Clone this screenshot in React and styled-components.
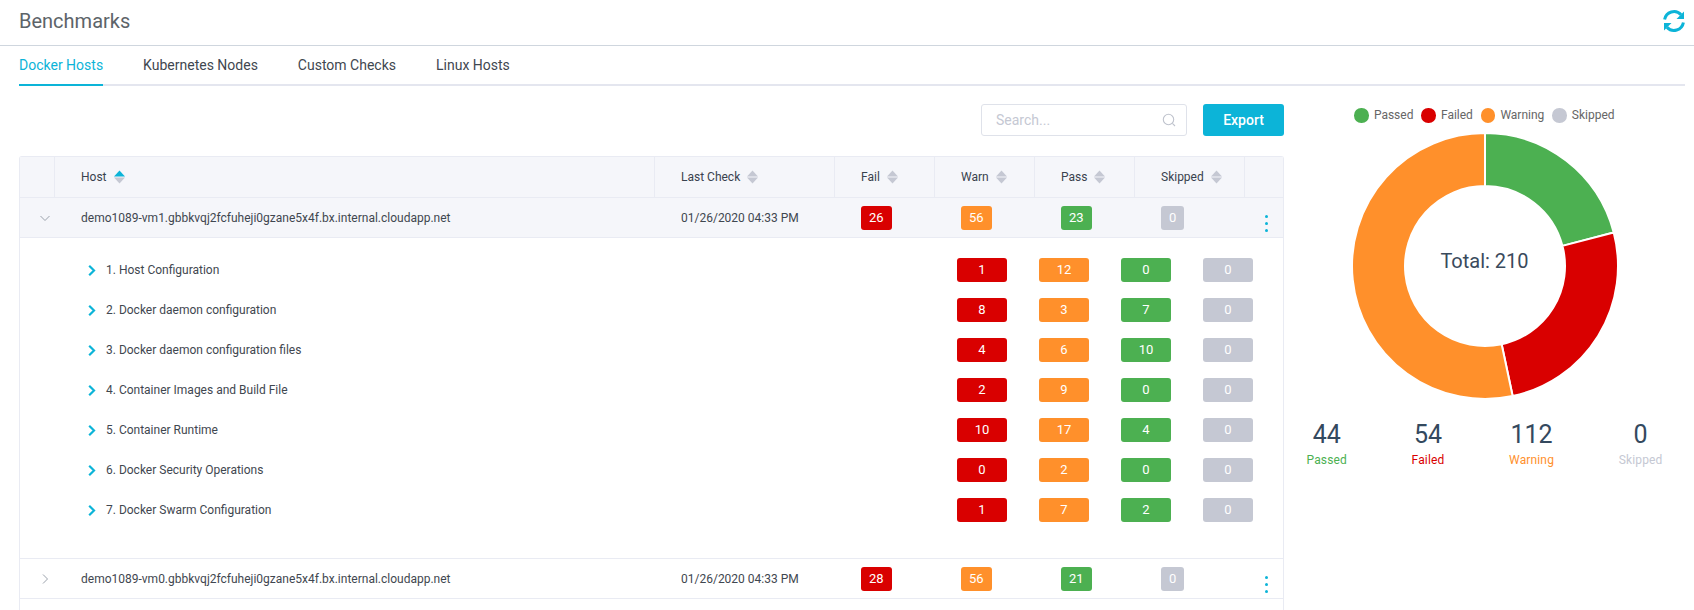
import React from "react";
import styled, { createGlobalStyle } from "styled-components";

const CYAN = "#0cb4d8";
const RED = "#d90000";
const ORANGE = "#ff902b";
const GREEN = "#4cb051";
const GREY = "#c5c8d3";
const LINE = "#e9ebf3";

const Global = createGlobalStyle`
  html, body { margin: 0; padding: 0; background: #fff; overflow: hidden; }
  body { font-family: Roboto, "Liberation Sans", sans-serif; color: #3a4654; }
  * { box-sizing: border-box; }
`;

const Page = styled.div`
  width: 1694px;
  height: 610px;
  overflow: hidden;
`;
const TopBar = styled.header`
  height: 46px;
  padding: 0 9px 0 19px;
  border-bottom: 1px solid #cfd6de;
  display: flex;
  align-items: center;
  justify-content: space-between;
`;
const Title = styled.h1`
  margin: 0 0 3px;
  font-size: 20px;
  font-weight: 400;
  color: #5d6469;
`;
const RefreshSvg = styled.svg`
  width: 22px;
  height: 22px;
  margin-bottom: 3px;
  fill: none;
  stroke: ${CYAN};
  stroke-width: 3;
`;
const Tabs = styled.nav`
  margin: 0 9px 0 19px;
  height: 40px;
  display: flex;
  gap: 40px;
  border-bottom: 2px solid #e4e6ef;
`;
const Tab = styled.div`
  height: 40px;
  padding-top: 10px;
  font-size: 14px;
  line-height: 18px;
  color: ${(p) => (p.$active ? CYAN : "#3f4750")};
  border-bottom: 2px solid ${(p) => (p.$active ? CYAN : "transparent")};
`;
const Content = styled.div`
  display: flex;
  padding: 18px 9px 0 19px;
`;
const Main = styled.main`
  width: 1265px;
  flex: none;
`;
const Tools = styled.div`
  display: flex;
  justify-content: flex-end;
  gap: 16px;
  margin-bottom: 20px;
`;
const Search = styled.div`
  width: 206px;
  height: 32px;
  border: 1px solid #dfe2ea;
  border-radius: 3px;
  padding: 0 10px 1px 14px;
  display: flex;
  align-items: center;
  justify-content: space-between;
  font-size: 14px;
  color: #c5c8d3;
`;
const Export = styled.button`
  width: 81px;
  height: 32px;
  border: 0;
  border-radius: 3px;
  padding: 0 0 1px;
  background: ${CYAN};
  color: #fff;
  font: 500 14px Roboto, sans-serif;
`;
const Table = styled.div`
  border: 1px solid ${LINE};
  border-bottom: 0;
  border-radius: 3px 3px 0 0;
  height: 460px;
`;
const Row = styled.div`
  display: grid;
  grid-template-columns: 35px 600px 180px 100px 100px 100px 110px 1fr;
  height: ${(p) => (p.$head ? "41px" : "40px")};
  background: ${(p) => (p.$tinted ? "#f5f6fa" : "#fff")};
  border-bottom: 1px solid ${LINE};
  font-size: 12px;
`;
const HeadCell = styled.div`
  display: flex;
  align-items: center;
  gap: 7px;
  padding-left: ${(p) => (p.$plain ? 0 : "26px")};
  border-right: 1px solid ${(p) => (p.$last ? "transparent" : LINE)};
  color: #39424e;
`;
const Cell = styled.div`
  display: flex;
  align-items: center;
  padding-left: 26px;
  color: #3f4750;
`;
const ToggleCell = styled.div`
  display: flex;
  align-items: center;
  justify-content: center;
  padding: 1px 0 0 15px;
`;
const MenuCell = styled.div`
  padding: 17px 0 0 20px;
`;
const Dots = styled.div`
  display: flex;
  flex-direction: column;
  gap: 4px;
  width: 3px;
`;
const Dot = styled.span`
  width: 3px;
  height: 3px;
  border-radius: 50%;
  background: ${CYAN};
`;
const Badge = styled.span`
  display: inline-block;
  height: 24px;
  line-height: 24px;
  min-width: ${(p) => (p.$wide ? "50px" : "0")};
  padding: ${(p) => (p.$wide ? "0" : "0 8px")};
  text-align: center;
  border-radius: 3px;
  font-size: 13px;
  font-weight: 400;
  color: #fff;
  background: ${(p) => p.$color};
`;
const Detail = styled.div`
  height: 321px;
  padding: 20px 0 0;
  border-bottom: 1px solid ${LINE};
  display: flex;
  flex-direction: column;
  gap: 16px;
`;
const Group = styled.div`
  height: 24px;
  display: flex;
  align-items: center;
  padding-left: 68px;
  font-size: 12px;
  color: #3f4750;
`;
const GroupName = styled.span`
  margin-left: 10px;
  width: 851px;
`;
const Counts = styled.div`
  display: flex;
  gap: 32px;
`;
const Side = styled.aside`
  flex: 1;
  display: flex;
  flex-direction: column;
  align-items: center;
`;
const Legend = styled.div`
  display: flex;
  height: 25px;
  margin-top: 4px;
  gap: 8px;
  font-size: 12px;
  color: #666;
`;
const LegendItem = styled.div`
  display: flex;
  align-items: flex-start;
  gap: 5px;
  line-height: 15px;
`;
const Swatch = styled.span`
  width: 14.5px;
  height: 14.5px;
  border-radius: 50%;
  background: ${(p) => p.$color};
`;
const Chart = styled.div`
  position: relative;
  width: 266px;
  height: 266px;
`;
const Total = styled.div`
  position: absolute;
  left: 0;
  right: 0;
  top: 116px;
  text-align: center;
  font-size: 20px;
  line-height: 24px;
  color: #3a4a5c;
`;
const Stats = styled.div`
  width: 356px;
  margin-top: 21px;
  display: flex;
  justify-content: space-between;
`;
const Stat = styled.div`
  display: flex;
  flex-direction: column;
  align-items: center;
`;
const StatValue = styled.div`
  font-size: 25px;
  line-height: 30px;
  color: #34495e;
`;
const StatLabel = styled.div`
  margin-top: 2px;
  font-size: 12px;
  letter-spacing: 0.15px;
  line-height: 16px;
  color: ${(p) => p.$color};
`;

const Refresh = () => (
  <RefreshSvg viewBox="0 0 22 22">
    <path d="M1.6 9.6A9.6 9.6 0 0 1 18 4.6" />
    <path d="M20.4 12.4A9.6 9.6 0 0 1 4 17.4" />
    <path d="M21 1.5V9h-7.5z" fill={CYAN} stroke="none" />
    <path d="M1 20.5V13h7.5z" fill={CYAN} stroke="none" />
  </RefreshSvg>
);
const SortIcon = ({ active }) => (
  <svg width="11" height="14" viewBox="0 0 11 14">
    <path d="M5.5.5 11 6.5H0z" fill={active ? CYAN : GREY} />
    <path d="M5.5 13.5 0 7.5h11z" fill={GREY} />
  </svg>
);
const Chevron = ({ down }) => (
  <svg width="10" height="10" viewBox="0 0 10 10" fill="none" stroke="#9aa1ab" strokeWidth="1">
    {down ? <path d="M.5 3 5 7.5 9.5 3" /> : <path d="M3 .5 7.5 5 3 9.5" />}
  </svg>
);
const GroupChevron = () => (
  <svg width="8" height="11" viewBox="0 0 8 11" fill="none" stroke={CYAN} strokeWidth="2.2">
    <path d="M1.2 .8 6 5.5 1.2 10.2" />
  </svg>
);
const Magnifier = () => (
  <svg width="14" height="14" viewBox="0 0 14 14" fill="none" stroke="#bfc3cd" strokeWidth="1.1">
    <circle cx="6.5" cy="6.5" r="5.2" />
    <path d="M10.4 10.4 13 13" />
  </svg>
);

const polar = (r, deg) => {
  const a = ((deg - 90) * Math.PI) / 180;
  return [133 + r * Math.cos(a), 133 + r * Math.sin(a)];
};
const Donut = ({ data }) => {
  const total = data.reduce((s, d) => s + d.value, 0);
  let at = 0;
  return (
    <svg width="266" height="266" viewBox="0 0 266 266">
      {data.map((d) => {
        const start = at;
        const end = at + (d.value / total) * 360;
        at = end;
        if (!d.value) return null;
        const [x1, y1] = polar(133, start);
        const [x2, y2] = polar(133, end);
        const [x3, y3] = polar(80, end);
        const [x4, y4] = polar(80, start);
        const large = end - start > 180 ? 1 : 0;
        return (
          <path
            key={d.label}
            d={`M${x1} ${y1}A133 133 0 ${large} 1 ${x2} ${y2}L${x3} ${y3}A80 80 0 ${large} 0 ${x4} ${y4}Z`}
            fill={d.color}
            stroke="#fff"
            strokeWidth="2"
          />
        );
      })}
    </svg>
  );
};

const chart = [
  { label: "Passed", value: 44, color: GREEN },
  { label: "Failed", value: 54, color: RED },
  { label: "Warning", value: 112, color: ORANGE },
  { label: "Skipped", value: 0, color: GREY },
];
const heads = ["Last Check", "Fail", "Warn", "Pass", "Skipped"];
const groups = [
  ["1. Host Configuration", 1, 12, 0, 0],
  ["2. Docker daemon configuration", 8, 3, 7, 0],
  ["3. Docker daemon configuration files", 4, 6, 10, 0],
  ["4. Container Images and Build File", 2, 9, 0, 0],
  ["5. Container Runtime", 10, 17, 4, 0],
  ["6. Docker Security Operations", 0, 2, 0, 0],
  ["7. Docker Swarm Configuration", 1, 7, 2, 0],
];
const colors = [RED, ORANGE, GREEN, GREY];

const HostRow = ({ name, open, counts }) => (
  <Row $tinted={open}>
    <ToggleCell>
      <Chevron down={open} />
    </ToggleCell>
    <Cell>{name}</Cell>
    <Cell>01/26/2020 04:33 PM</Cell>
    {counts.map((c, i) => (
      <Cell key={i}>
        <Badge $color={colors[i]}>{c}</Badge>
      </Cell>
    ))}
    <MenuCell>
      <Dots>
        <Dot />
        <Dot />
        <Dot />
      </Dots>
    </MenuCell>
  </Row>
);

export default function App() {
  return (
    <Page>
      <Global />
      <TopBar>
        <Title>Benchmarks</Title>
        <Refresh />
      </TopBar>
      <Tabs>
        <Tab $active>Docker Hosts</Tab>
        <Tab>Kubernetes Nodes</Tab>
        <Tab>Custom Checks</Tab>
        <Tab>Linux Hosts</Tab>
      </Tabs>
      <Content>
        <Main>
          <Tools>
            <Search>
              Search...
              <Magnifier />
            </Search>
            <Export>Export</Export>
          </Tools>
          <Table>
            <Row $head $tinted>
              <HeadCell $plain />
              <HeadCell>
                Host <SortIcon active />
              </HeadCell>
              {heads.map((h) => (
                <HeadCell key={h}>
                  {h} <SortIcon />
                </HeadCell>
              ))}
              <HeadCell $plain $last />
            </Row>
            <HostRow
              open
              name="demo1089-vm1.gbbkvqj2fcfuheji0gzane5x4f.bx.internal.cloudapp.net"
              counts={[26, 56, 23, 0]}
            />
            <Detail>
              {groups.map(([name, ...counts]) => (
                <Group key={name}>
                  <GroupChevron />
                  <GroupName>{name}</GroupName>
                  <Counts>
                    {counts.map((c, i) => (
                      <Badge key={i} $wide $color={colors[i]}>
                        {c}
                      </Badge>
                    ))}
                  </Counts>
                </Group>
              ))}
            </Detail>
            <HostRow
              name="demo1089-vm0.gbbkvqj2fcfuheji0gzane5x4f.bx.internal.cloudapp.net"
              counts={[28, 56, 21, 0]}
            />
          </Table>
        </Main>
        <Side>
          <Legend>
            {chart.map((d) => (
              <LegendItem key={d.label}>
                <Swatch $color={d.color} />
                {d.label}
              </LegendItem>
            ))}
          </Legend>
          <Chart>
            <Donut data={chart} />
            <Total>Total: 210</Total>
          </Chart>
          <Stats>
            {chart.map((d) => (
              <Stat key={d.label}>
                <StatValue>{d.value}</StatValue>
                <StatLabel $color={d.color}>{d.label}</StatLabel>
              </Stat>
            ))}
          </Stats>
        </Side>
      </Content>
    </Page>
  );
}
